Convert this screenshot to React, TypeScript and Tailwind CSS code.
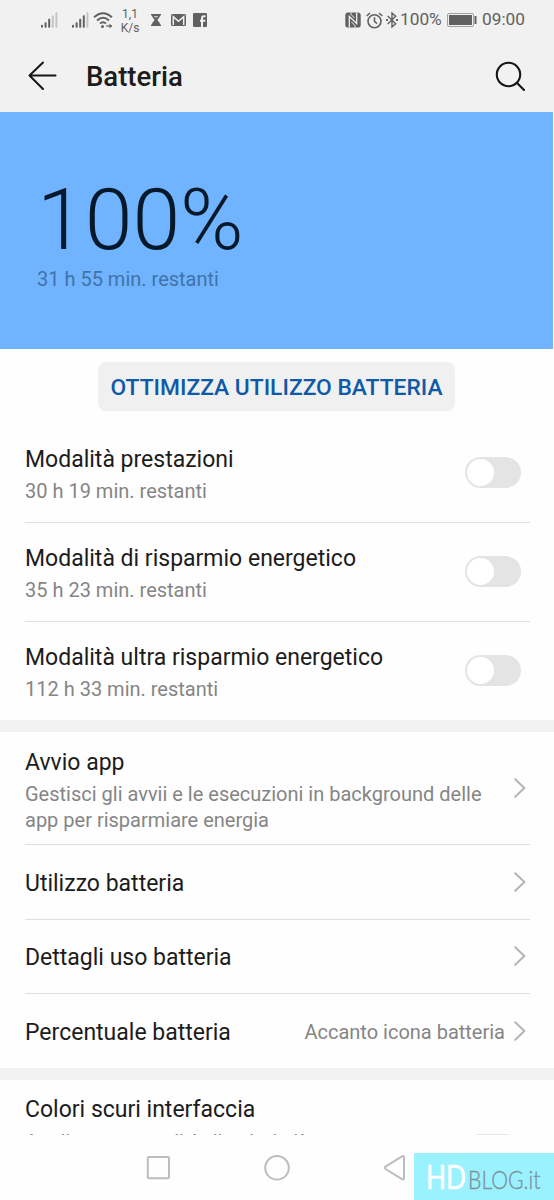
import React from "react";

const modes = [
  { title: "Modalità prestazioni", left: "30 h 19 min. restanti" },
  { title: "Modalità di risparmio energetico", left: "35 h 23 min. restanti" },
  { title: "Modalità ultra risparmio energetico", left: "112 h 33 min. restanti" },
];

const links = [
  { title: "Utilizzo batteria", value: "" },
  { title: "Dettagli uso batteria", value: "" },
  { title: "Percentuale batteria", value: "Accanto icona batteria" },
];

export default function App() {
  return (
    <main className="flex h-[1200px] w-[554px] flex-col overflow-hidden bg-[#fefefe] font-['Roboto',sans-serif] text-[#1c1c1c]">
      <StatusBar />

      {/* ── Title bar ── */}
      <header className="flex h-[72px] shrink-0 items-center bg-[#f1f1f1] pr-7 pl-7">
        <svg className="h-[30px] w-[30px]" viewBox="0 0 30 30" fill="none" stroke="#161616" strokeWidth="2" strokeLinecap="round" strokeLinejoin="round">
          <path d="M27.5 14.5H1.5M15 1.5L1.5 14.5L15 28" />
        </svg>
        <h1 className="ml-7 pt-px text-[27.5px] font-medium leading-none">Batteria</h1>
        <svg className="ml-auto h-8 w-8" viewBox="0 0 32 32" fill="none" stroke="#161616" strokeWidth="2.1" strokeLinecap="round">
          <circle cx="14.5" cy="14.5" r="11.7" />
          <path d="M22.8 22.8L30 30" />
        </svg>
      </header>

      {/* ── Charge level ── */}
      <section className="mr-px h-[237px] shrink-0 bg-[#70b3ff] pt-[62px] pl-[37px]">
        <div className="text-[86px] font-light leading-[92px] text-[#06192b]">100%</div>
        <div className="mt-px text-[20px] leading-6 text-[#4073a8]">31 h 55 min. restanti</div>
      </section>

      <div className="flex h-[75px] shrink-0 justify-center pt-[13px] pr-px">
        <button className="h-[49px] w-[357px] rounded-lg bg-[#f0f0f0] pt-[4px] text-[22.8px] font-medium whitespace-nowrap text-[#0f5aa8]">
          OTTIMIZZA UTILIZZO BATTERIA
        </button>
      </div>

      {/* ── Modes ── */}
      <section className="shrink-0">
        {modes.map((mode, i) => (
          <div
            key={mode.title}
            className={`mr-[24px] ml-[25px] flex items-center justify-between pr-[9px] ${i < modes.length - 1 ? "h-[99px] border-b border-[#dedede]" : "h-[98px]"}`}
          >
            <div className="pt-[3px]">
              <Title>{mode.title}</Title>
              <p className="mt-[3px] text-[20px] leading-[26px] text-[#858585]">{mode.left}</p>
            </div>
            <div className="mb-[2px]">
              <Toggle />
            </div>
          </div>
        ))}
      </section>

      <Divider />

      {/* ── Links ── */}
      <section className="shrink-0">
        <div className="mr-[24px] ml-[25px] flex h-[113px] items-center justify-between border-b border-[#dedede] pr-1">
          <div className="pt-[5px]">
            <Title>Avvio app</Title>
            <p className="mt-[3px] text-[20px] leading-[26px] whitespace-nowrap text-[#858585]">
              Gestisci gli avvii e le esecuzioni in background delle
              <br />
              app per risparmiare energia
            </p>
          </div>
          <Chevron />
        </div>
        {links.map((link, i) => (
          <div
            key={link.title}
            className={`mr-[24px] ml-[25px] flex items-center pr-1 ${i < links.length - 1 ? "h-[74.5px] border-b border-[#dedede]" : "h-[74px]"}`}
          >
            <div className="pt-1">
              <Title>{link.title}</Title>
            </div>
            <span className="mr-[9px] ml-auto pt-px text-[20px] text-[#858585]">{link.value}</span>
            <Chevron />
          </div>
        ))}
      </section>

      <Divider />

      {/* ── Last row, cut by the navigation bar ── */}
      <section className="h-[55px] shrink-0 overflow-hidden">
        <div className="mr-[24px] ml-[25px] flex justify-between pt-[15px] pr-[9px]">
          <div>
            <Title>Colori scuri interfaccia</Title>
            <p className="mt-1 text-[20px] leading-[26px] text-[#858585]">Applica una tonalità di colori più</p>
          </div>
          <div className="pt-[39px]">
            <Toggle />
          </div>
        </div>
      </section>

      <NavBar />
    </main>
  );
}

function StatusBar() {
  return (
    <div className="flex h-10 shrink-0 items-center bg-[#f1f1f1] text-[#616161]">
      <Signal className="ml-10" bars={3} />
      <Signal className="ml-[13px]" bars={4} />
      <svg className="ml-[4px] h-5 w-5" viewBox="0 0 20 20" fill="none" stroke="currentColor" strokeWidth="1.9">
        <path d="M1 7.3Q10 -1 19 7.3M4 10.5Q10 5 16 10.5M7 13.5Q10 11 13 13.5" />
        <circle cx="9.5" cy="16.5" r="1.5" fill="currentColor" stroke="none" />
        <path d="M13 16H19" strokeWidth="1.2" />
        <path d="M16.5 13.5L19 16L16.5 18.5z" fill="currentColor" stroke="none" />
      </svg>
      <div className="ml-[7px] w-5 pt-[2px] text-center text-[12px] leading-[14px]">
        1,1
        <br />
        K/s
      </div>
      <svg className="ml-[11px] h-3 w-[10px]" viewBox="0 0 10 12" fill="currentColor">
        <path d="M0 0H10V1.6H9C9 4 6.5 5 6.5 6S9 8 9 10.4H10V12H0V10.4H1C1 8 3.5 7 3.5 6S1 4 1 1.6H0z" />
        <path d="M3 2.2H7L6.5 3.2H3.5z" fill="#f1f1f1" />
      </svg>
      <svg className="ml-[10px] h-3 w-[15px]" viewBox="0 0 15 12">
        <rect width="15" height="12" rx="1.5" fill="currentColor" />
        <path d="M2.3 11V2.6L7.5 7.2L12.7 2.6V11" fill="none" stroke="#f1f1f1" strokeWidth="1.5" />
      </svg>
      <svg className="ml-[7px] h-[14px] w-[14px]" viewBox="0 0 14 14">
        <rect width="14" height="14" rx="1.3" fill="currentColor" />
        <path d="M9 14V5.5Q9 3.2 11 3.2H12.5M7 7.7H12.3" fill="none" stroke="#f1f1f1" strokeWidth="2" />
      </svg>

      <svg className="ml-auto h-4 w-4" viewBox="0 0 16 16">
        <path d="M2.5 0.5H13.5Q15.7 0.5 15.7 3V13Q15.7 15.5 13.5 15.5H2.5Q0.3 15.5 0.3 13V3Q0.3 0.5 2.5 0.5z" fill="currentColor" />
        <path d="M4.3 15.5V4.5L11.7 11.5V0.5" fill="none" stroke="#f1f1f1" strokeWidth="1.3" />
        <path d="M6 0.5V2.5L9.5 6M10 15.5V13.5L6.5 10" fill="none" stroke="#f1f1f1" strokeWidth="1" />
      </svg>
      <svg className="ml-[5px] h-[17px] w-[17px]" viewBox="0 0 17 17" fill="none" stroke="currentColor" strokeWidth="1.6">
        <circle cx="8.5" cy="9.3" r="6.5" />
        <path d="M8.5 5.3V9.5L11 11.7M0.7 4L4 1M16.3 4L13 1" />
      </svg>
      <svg className="ml-[3px] h-[18px] w-[12px]" viewBox="0 0 12 18" fill="none" stroke="currentColor" strokeWidth="1.4">
        <path d="M1.7 5L9.7 12.7L6 16V2L9.7 5.3L1.7 13" />
        <path d="M0 9H2M10 9H12" strokeWidth="1.8" />
      </svg>
      <span className="ml-[2px] w-[42px] pb-px text-[17.3px] whitespace-nowrap">100%</span>
      <svg className="ml-[5px] h-[14px] w-[30px]" viewBox="0 0 30 14">
        <rect x="0.5" y="0.5" width="26" height="13" rx="1.5" fill="none" stroke="#a0a0a0" />
        <rect x="2" y="2" width="23" height="10" fill="currentColor" />
        <rect x="27.5" y="3" width="2" height="8" rx="0.5" fill="currentColor" />
      </svg>
      <span className="mr-[29px] ml-[5px] pb-px text-[17.3px]">09:00</span>
    </div>
  );
}

function Signal({ bars, className }: { bars: number; className: string }) {
  const heights = [3, 5.5, 9, 12.5, 15.5];
  return (
    <svg className={`h-4 w-[18px] ${className}`} viewBox="0 0 18 16" fill="currentColor">
      {heights.map((h, i) => (
        <rect key={h} x={1 + i * 3.6} y={15.7 - h} width="2" height={h} rx="0.8" opacity={i < bars ? 1 : 0.3} />
      ))}
    </svg>
  );
}

function Title({ children }: { children: React.ReactNode }) {
  return <h2 className="text-[23px] leading-[30px] whitespace-nowrap">{children}</h2>;
}

function Toggle() {
  return (
    <div className="flex h-[31px] w-[56px] items-center rounded-full bg-[#e4e4e4] pl-[2px]">
      <div className="h-[27px] w-[27px] rounded-full bg-white" />
    </div>
  );
}

function Chevron() {
  return (
    <svg className="h-5 w-3" viewBox="0 0 12 20" fill="none" stroke="#b5b5b5" strokeWidth="2" strokeLinecap="round" strokeLinejoin="round">
      <path d="M1.2 1.2L10.4 10L1.2 18.8" />
    </svg>
  );
}

function Divider() {
  return <div className="h-3 shrink-0 bg-[#f2f2f2]" />;
}

function NavBar() {
  return (
    <nav className="relative h-[65px] shrink-0">
      <div className="flex pt-5 pl-[146px]">
        <svg className="h-[26px] w-[262px]" viewBox="0 0 262 26" fill="none" stroke="#bdbdbd" strokeWidth="2">
          <rect x="1.8" y="2" width="21.2" height="21.2" rx="1" />
          <circle cx="131" cy="12.8" r="11.8" />
          <path d="M258 2.2V23.2Q258 25 256 24L239.5 14Q238 12.8 239.5 11.6L256 1.4Q258 0.4 258 2.2z" />
        </svg>
      </div>
      {/* Site badge over the bottom corner */}
      <div className="absolute right-0 bottom-0 flex h-[47px] w-[140px] items-baseline bg-[#99f2fe] pl-3 font-['Lato',sans-serif] leading-[48px] whitespace-nowrap">
        <span className="w-[42px] origin-left scale-x-[0.82] text-[32px] text-white [-webkit-text-stroke:0.5px_white]">HD</span>
        <span className="w-[74px] origin-left scale-x-[0.83] text-[25.5px] font-light text-[#7f8f9a] [-webkit-text-stroke:0.3px_#7f8f9a]">BLOG.it</span>
      </div>
    </nav>
  );
}
